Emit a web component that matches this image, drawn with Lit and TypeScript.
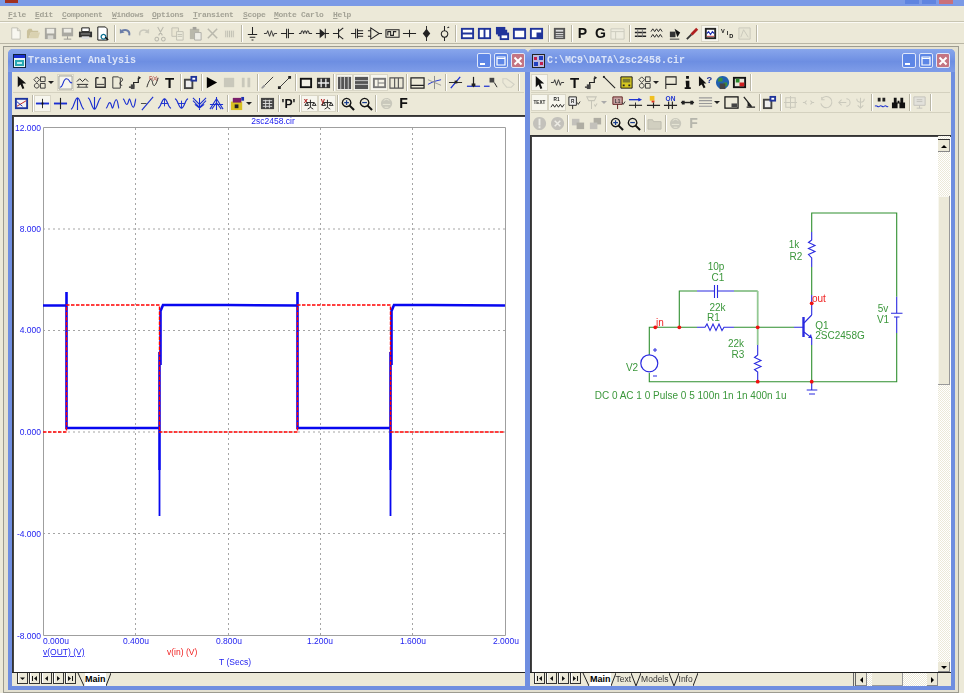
import { LitElement, html, css, svg } from "lit";
import { customElement } from "lit/decorators.js";

const L = (d: string, c = "#222", w = 1) => svg`<path d=${d} fill="none" stroke=${c} stroke-width=${w}/>`;
const F = (d: string, c = "#222") => svg`<path d=${d} fill=${c}/>`;
const X = (t: string, c = "#111", s = 14, fam = "Liberation Serif", w = "700", x = 8, y = 13) =>
  svg`<text x=${x} y=${y} fill=${c} font-size=${s} font-family=${fam} font-weight=${w} text-anchor="middle">${t}</text>`;
const B = "#1a2fd0";

const icons: Record<string, unknown[]> = {
  new: [F("M4 2h6l3 3v9H4z", "#fff"), L("M4 2h6l3 3v9H4zM10 2v3h3", "#a8a8a0")],
  open: [F("M1 13V5l2-2h3l1 2h6v2H5L3 13z", "#b5a878"), F("M3 13l2-6h10l-2 6z", "#cfc49a")],
  save: [F("M2 2h12v12H2z", "#7c7c7c"), F("M4 3h8v5H4z", "#eee"), F("M5 10h6v4H5z", "#ccc")],
  saveall: [F("M2 2h12v9H2z", "#808080"), F("M4 3h8v4H4z", "#eee"), L("M8 11v3M4 14h8", "#666")],
  print: [F("M4 2h8v4H4z", "#fff"), L("M4 2h8v4H4z", "#111"), F("M1 6h14v6H1z", "#333"), F("M3 8h10v1H3z", "#999"), F("M4 11h8v3H4z", "#ddd")],
  preview: [F("M3 1h8l2 2v12H3z", "#fff"), L("M3 1h8l2 2v12H3z", "#111"), L("M9 9a2.500 2.500 0 1 0 .1 0z", "#0a6f8f", 1.4), L("M11 12l3 3", "#111", 1.6)],
  undo: [L("M4 5c5-2 9 0 8 5", "#1b3a8a", 2), F("M2 3v5l5-1z", "#1b3a8a")],
  redo: [L("M12 5c-5-2-9 0-8 5", "#b5b5ac", 1.6), F("M14 3v5l-5-1z", "#b5b5ac")],
  cut: [L("M5 1l5 9M11 1L6 10M4 12a2 2 0 1 0 .1 0zM11 12a2 2 0 1 0 .1 0z", "#9c9c94", 1.1)],
  copy: [F("M2 2h7v9H2z", "#e8e4d0"), L("M2 2h7v9H2z", "#a5a59c"), F("M7 6h7v9H7z", "#f0eee0"), L("M7 6h7v9H7zM8 9h5M8 11h5", "#a5a59c")],
  paste: [F("M2 3h10v11H2z", "#9a9a90"), F("M5 1h4v3H5z", "#777"), F("M7 7h7v8H7z", "#eee"), L("M7 7h7v8H7z", "#888")],
  del: [L("M3 3l10 10M13 3L3 13", "#9c9c94", 1.6)],
  allb: [F("M2 4h12v9H2z", "#e8e5d6"), L("M4 5v7M6 5v7M8 5v7M10 5v7M12 5v7", "#a0a098", 1)],
  gnd: [L("M8 1v8M3 9h10M5 12h6M7 15h2", "#222", 1.1)],
  res: [L("M1 8h3l1-3 2 6 2-6 2 6 1-3h3", "#333")],
  cap: [L("M1 8h6M9 8h6M7 3v10M9 3v10", "#222", 1.1)],
  ind: [L("M1 8h2c1-4 2-4 3 0 1-4 2-4 3 0 1-4 2-4 3 0h3", "#333", 1.1)],
  diode: [F("M5 3v10l6-5z"), L("M1 8h14M11 3v10", "#222", 1.1)],
  bjt: [L("M1 8h6M7 3v10M7 6l5-4M7 10l5 4", "#222", 1.2)],
  mos: [L("M1 8h5M6 3v10M8 3v10M8 5h6M8 11h6M8 8h6", "#222", 1.1)],
  opamp: [L("M4 2v12l9-6zM1 5h3M1 11h3M13 8h3", "#222", 1.1)],
  xfmr: [L("M1 4h14v8H1zM3 10V6h3v4h3V6h3", "#222", 1.1)],
  wire: [L("M1 8h14M8 4v8", "#222", 1.1)],
  node: [F("M8 3l4 5-4 5-4-5z"), L("M8 0v16", "#222")],
  src: [L("M8 5a3.500 3.500 0 1 0 .1 0zM8 0v5M8 12v4M11 2l2-1", "#222", 1.1)],
  h2: [F("M1 2h14v12H1z", "#20349a"), F("M3 4h10v3H3zM3 9h10v3H3z", "#fff")],
  v2: [F("M1 2h14v12H1z", "#20349a"), F("M3 4h4v8H3zM9 4h4v8H9z", "#fff")],
  casc: [F("M1 1h10v8H1z", "#20349a"), F("M3 4h10v7H3z", "#20349a"), F("M5 7h10v8H5z", "#20349a"), F("M7 10h6v3H7z", "#fff")],
  win: [F("M1 2h14v12H1z", "#20349a"), F("M3 5h10v7H3z", "#fff")],
  tile: [F("M1 2h14v12H1z", "#20349a"), F("M3 4h5v8H3zM8 4h5v3H8z", "#fff")],
  calc: [F("M2 2h12v12H2z", "#555"), F("M4 4h8v2H4z", "#ddd"), L("M4 8h8M4 10h8M4 12h8", "#ddd")],
  P: [X("P", "#111", 15)],
  G: [X("G", "#111", 15)],
  grid0: [F("M1 3h14v11H1z", "#efeee4"), L("M1 3h14v11H1zM1 6h14M6 6v8", "#b8b8ae")],
  dots: [L("M2 3h12M2 7h12M2 11h12", "#222", 1.5), L("M5 3v9M10 3v9", "#777", 1)],
  waves: [L("M1 6l2-3 2 3 2-3 2 3 2-3 2 3M1 12l2-3 2 3 2-3 2 3 2-3 2 3", "#222")],
  probe: [F("M2 6h6v6H2z", "#333"), F("M7 3l6 4-3 5z", "#111"), L("M2 14h10", "#333")],
  screw: [L("M2 14l5-5", "#333", 2), L("M7 9l6-6", "#b02020", 3)],
  analyz: [F("M2 2h12v12H2z", "#222"), F("M4 4h8v8H4z", "#fff"), L("M4 8l2-2 2 3 2-3 2 2", "#2030b0", 1.2), L("M4 11h8", "#b03030")],
  vid: [X("V", "#111", 6, "Liberation Sans", "700", 3, 7), X("I", "#111", 6, "Liberation Sans", "700", 8, 10), X("D", "#111", 6, "Liberation Sans", "700", 12, 13)],
  dis: [F("M2 2h12v12H2z", "#e4e2d2"), L("M2 2h12v12H2zM4 12l3-8 5 8", "#b3b3aa")],
  arrow: [F("M4 1v12l3-3 2 5 2-1-2-5h4z", "#111")],
  comp: [L("M5 2l3 3-3 3-3-3zM9 2h5v5H9zM5 9a2.500 2.500 0 1 0 .1 0zM9 9h5v5H9z", "#333")],
  curve: [L("M1 1h14v14H1z", "#9a9a90"), L("M2 13c4 0 3-9 7-9s3 6 6 4", B, 1.1)],
  curves2: [L("M2 7l3-3 3 3 3-3 3 3M2 10h12", "#222"), L("M2 13h12M4 10v3M12 10v3", "#444")],
  bracket: [L("M3 3v10h10V3M3 3h3M10 3h3", "#333", 1.5), L("M4 10h8", "#333")],
  data: [L("M3 2h6l2 2v10H3z", "#333"), L("M11 3c3 0 3 3 1 4s-2 4 1 4", "#222")],
  step: [L("M1 13h5V8h5V3", "#222", 1.3), F("M11 1l3 2-3 2z", "#222"), F("M3 10h4v5H3z", "#444")],
  fxy: [L("M2 13C5 3 7 3 8 8s3 5 6-5", "#222"), X("F(x)", "#a02020", 5, "Liberation Sans", "400", 9, 5)],
  T: [X("T", "#111", 16, "Liberation Serif", "700", 8, 14)],
  props: [F("M1 4h10v11H1z", "#444"), F("M3 6h6v7H3z", "#eee"), F("M8 1h7v6H8z", "#20349a"), F("M10 3h3v2h-3z", "#fff")],
  play: [F("M3 2v12l11-6z", "#000")],
  stop: [F("M2 3h11v10H2z", "#b4b4aa")],
  pause: [F("M3 3h3v10H3zM9 3h3v10H9z", "#b4b4aa")],
  line: [L("M2 14L14 2", "#333"), L("M2 14l3-3", "#999", 2)],
  line2: [L("M2 14L14 2", "#333"), F("M1 12h3v3H1zM12 1h3v3h-3z", "#222")],
  frame: [F("M2 3h13v11H2z", "#111"), F("M4 5h9v7H4z", "#f3f1e6")],
  gridb: [F("M1 3h14v11H1z", "#333"), L("M5.500 4v9M10.500 4v9M2 8.500h12", "#eee", 1.4)],
  vlines: [F("M1 2h14v13H1z", "#555"), L("M4 2v13M8 2v13M12 2v13", "#ccc")],
  hlines: [F("M1 2h14v13H1z", "#555"), L("M1 6h14M1 10h14", "#ccc")],
  mix1: [F("M1 3h14v11H1z", "#777"), F("M3 5h3v7H3zM7 5h6v3H7zM7 9h6v3H7z", "#f6f4e9")],
  mix2: [L("M1 3h14v11H1zM6 3v11M10 3v11", "#555", 1.2)],
  panel: [L("M1 3h14v11H1zM1 11h14", "#222", 1.3)],
  lines: [L("M1 10l6-3 8-2", "#1a2fd0"), L("M1 5l14 6", "#999"), L("M8 1v14", "#888")],
  cross: [L("M3 14L13 2", B, 1.4), L("M1 8h14", "#222"), F("M7 6h3v3H7z", "#222")],
  cross2: [L("M1 12h14", B, 1.3), L("M8 2v11", "#222", 1.3), F("M6 9h4v3H6z", "#222")],
  jump: [L("M1 12h6", B, 1.3), F("M7 3h5v5H7z", "#444"), L("M12 8l3 5", "#222")],
  hand: [L("M2 4l4 0 8 6-3 3H6L2 8z", "#c2c2b8", 1.2)],
  scale: [F("M1 2h14v12H1z", "#1c34a0"), F("M3 4h10v8H3z", "#f2f2f2"), L("M3 11L13 5", "#c02020"), L("M3 6l6 5", "#2030b0")],
  crossh: [F("M1 7h14v2H1z", B), L("M8 3v10", "#222"), F("M7 7h2v2H7z", "#111")],
  crossh2: [F("M1 7h14v2H1z", B), L("M8 2v12", "#222", 1.2)],
  peak: [L("M1 14C4 14 5 2 8 2s4 12 7 12M8 2v13", B, 1.2)],
  val: [L("M1 2c3 0 4 12 7 12s4-12 7-12M8 1v13", B, 1.2)],
  pk2: [L("M1 13c2 0 2-6 4-6s2 6 3 6 2-9 4-9 2 9 3 9", B, 1.2)],
  val2: [L("M1 3c2 0 2 6 4 6s2-6 3-6 2 9 4 9 2-9 3-9", B, 1.2)],
  slope: [L("M2 15L14 1", B, 1.2), L("M1 8h6", "#444")],
  hi: [L("M1 13C4 13 5 3 8 3s4 10 7 10", B, 1.2), L("M4 8h8M8 3v8", B, 1)],
  lo: [L("M1 3c3 0 4 10 7 10s4-10 7-10", B, 1.2), L("M4 8h8M8 13V5", B, 1)],
  many: [L("M1 2l7 7 7-7M1 5l7 7 7-7M8 2v13M3 9l5 4 5-4", B, 1.1)],
  manyu: [L("M1 14L8 3l7 11M3 14l5-7 5 7M1 9h14M8 1v14", B, 1.1)],
  kit: [F("M1 6h12v9H1z", "#d8c020"), F("M3 2h9v5H3z", "#7a1f6a"), F("M5 9h4v4H5z", "#222"), F("M12 1h3v4h-3z", "#2030b0")],
  table: [F("M1 2h14v12H1z", "#444"), L("M3 5h10M3 8h10M3 11h10M6 4v9M10 4v9", "#ddd")],
  Pq: [X("'P'", "#111", 13, "Liberation Serif", "700", 8, 13)],
  xb: [X("x", "#b02020", 8, "Liberation Sans", "700", 4, 7), L("M9 4v8M5 7h8M6 14l3-2 3 2M5 7l-2 3h4zM13 7l-2 3h4z", "#222")],
  yb: [X("y", "#b02020", 8, "Liberation Sans", "700", 4, 7), L("M9 4v8M5 7h8M6 14l3-2 3 2M5 7l-2 3h4zM13 7l-2 3h4z", "#222")],
  zin: [L("M7 2.500a4.500 4.500 0 1 0 .1 0z", "#111", 1.4), L("M10 10l5 5", "#111", 2.2), L("M4.500 7h5M7 4.500v5", "#183c8e", 1.3)],
  zout: [L("M7 2.500a4.500 4.500 0 1 0 .1 0z", "#111", 1.4), L("M10 10l5 5", "#111", 2.2), L("M4.500 7h5", "#183c8e", 1.3)],
  palette: [F("M8 2a6 6 0 1 0 .1 0z", "#b5b5ab"), L("M5 5a4 4 0 0 1 6 0M4 9h8M6 12h4", "#e8e6d8")],
  F: [X("F", "#111", 15)],
  Fd: [X("F", "#b6b6ac", 15)],
  trace: [L("M1 2h5v6h5v5h4", "#222", 1.3), L("M12 13l2 2", "#222")],
  diag: [L("M2 2l12 12", "#222", 1.2), F("M1 1h2v2H1z", "#222")],
  chip: [F("M2 2h12v12H2z", "#d6c820"), L("M2 2h12v12H2z", "#111"), F("M4 4h8v4H4z", "#7a7a30"), F("M4 10h2v2H4zM10 10h2v2h-2z", "#222")],
  flag: [L("M3 15V2h11v8H3", "#222", 1.1)],
  info: [F("M6.500 1h3v3h-3zM6 6h4v7h1.500v2h-6.500v-2h1.500z", "#111")],
  help: [F("M1 1v11l3-2 2 4 2-1-2-4h3z", "#111"), X("?", "#20349a", 10, "Liberation Sans", "700", 12, 9)],
  globe: [F("M8 1a7 7 0 1 0 .1 0z", "#2060b0"), F("M4 3h4v4H3zM9 8h4v4H9z", "#3a8f3a"), F("M5 9h6v6H5z", "#444")],
  run: [F("M1 2h14v12H1z", "#111"), F("M3 4h10v8H3z", "#e8e6da"), F("M4 4h4v4H4z", "#2a8a2a"), F("M8 8h5v4H8z", "#d02020")],
  txt: [X("TEXT", "#222", 5, "Liberation Sans", "700", 8, 10)],
  rnum: [X("R1", "#222", 5, "Liberation Sans", "700", 7, 6), L("M1 13l2-3 2 3 2-3 2 3 2-3 2 3 2-3", "#222")],
  pin: [F("M2 2h8v9H2z", "#eee"), L("M2 2h8v9H2zM6 11v4", "#222"), X("R", "#222", 5, "Liberation Sans", "700", 6, 8), L("M11 8l1 2 2-3", "#333")],
  sw: [L("M3 2h10l-2 4H5zM8 6v9M11 10l1 2 2-3", "#b0b0a6", 1.1)],
  pinr: [F("M2 2h10v8H2z", "#c6a0a0"), L("M2 2h10v8H2zM7 10v5", "#612020"), X("L1", "#333", 5, "Liberation Sans", "700", 7, 8), L("M12 8l1 2 2-3", "#333")],
  arrw: [L("M1 5h11", B, 1.4), F("M11 3l4 2-4 2z", B), L("M1 11h14", "#222", 1.2), L("M8 8v6", "#222")],
  fault: [F("M4 1h5v5H4z", "#f0c020"), F("M6 6h3v2H6z", "#e03020"), L("M1 11h14M8 8v6", "#222", 1.2)],
  on: [X("ON", "#1a2fd0", 7, "Liberation Sans", "700", 8, 6), L("M1 11h14M6 7v8M10 7v8", "#222", 1.2)],
  dash: [L("M1 8h14", "#222", 1.5), F("M2 6h3v4H2zM11 6h3v4h-3z", "#222")],
  dotgrid: [L("M1 3h14M1 6h14M1 9h14M1 12h14", "#999", 1.2)],
  page: [L("M1 2h14v12H1z", "#111", 1.3), F("M8 9h6v4H8z", "#444")],
  cursor: [L("M3 2l8 10M6 13h9", "#222", 1.3), F("M7 7l5 6-5-1z", "#222")],
  grp: [L("M3 3h10v10H3zM1 8h14M8 1v14", "#b6b6ac", 1.1)],
  mirror: [L("M2 8h3M11 8h3M6 6l-2 2 2 2M10 6l2 2-2 2", "#b6b6ac", 1.1)],
  rot: [L("M4 4a6 6 0 1 1-1 5M4 2v3h3", "#b6b6ac", 1.1)],
  flip: [L("M3 8h8M11 4a4 4 0 0 1 0 8M6 5l-3 3 3 3", "#b6b6ac", 1.1)],
  flipv: [L("M8 3v10M4 4c0 5 8 5 8 0M5 11l3 3 3-3", "#b6b6ac", 1.1)],
  wfind: [F("M4 3h3v4H4zM9 3h3v4H9z", "#222"), L("M1 12c2-2 3 2 5 0s3 2 5 0 3 2 4 0", B, 1.1)],
  bino: [F("M1 8h6v6H1zM9 8h6v6H9zM3 3h3v6H3zM10 3h3v6h-3zM7 6h2v3H7z", "#111")],
  screen: [F("M2 2h12v9H2z", "#ddd"), L("M2 2h12v9H2zM5 5h6M5 7h6M8 11v3M5 14h6", "#aaa")],
  warn: [F("M8 1a7 7 0 1 0 .1 0z", "#aaa"), F("M7 3h2v7H7zM7 11h2v2H7z", "#eee")],
  xc: [F("M8 1a7 7 0 1 0 .1 0z", "#aaa"), L("M5 5l6 6M11 5l-6 6", "#eee", 1.6)],
  mv1: [F("M1 3h8v7H1z", "#aaa"), F("M6 7h8v7H6z", "#8a8a84")],
  mv2: [F("M6 2h8v7H6z", "#8a8a84"), F("M2 7h8v7H2z", "#aaa")],
  folder: [F("M1 4h5l1 2h8v8H1z", "#c2c0b2"), L("M1 4h5l1 2h8v8H1z", "#a0a096")],
};

const topRow = "new open save saveall print preview | undo redo cut copy paste del allb | gnd res cap ind diode bjt mos opamp xfmr wire node src | h2 v2 casc win tile | calc | P G grid0 | dots waves probe screw *analyz vid ~dis |";
const lr1 = "arrow comp v *curve curves2 bracket data step fxy T | props | play stop pause | line line2 | frame gridb | *vlines *hlines *mix1 mix2 | panel lines | cross cross2 jump ~hand |";
const lr2 = "scale | *crossh crossh2 peak val pk2 val2 slope hi lo many manyu | kit v | table | Pq | *xb *yb | zin zout | palette F";
const rr1 = "*arrow res T step diag chip comp v flag info help globe run |";
const rr2 = "*txt *rnum pin sw ~v pinr arrw fault on dash dotgrid v page cursor | props | grp mirror rot flip flipv | wfind bino | screen |";
const rr3 = "warn xc | mv1 mv2 | zin zout | folder | palette Fd";
const faded = new Set(["new","open","save","saveall","undo","redo","cut","copy","paste","del","allb","grp","mirror","rot","flip","flipv","screen","warn","xc","mv1","mv2","folder","palette","stop","pause","grid0","sw","hand","dis"]);

@customElement("app-root")
export class AppRoot extends LitElement {
  static styles = css`
    :host { display: block; width: 964px; height: 693px; overflow: hidden; background: #ece9d8; font-family: "Liberation Sans", sans-serif; }
    .app { display: flex; flex-direction: column; height: 693px; filter: blur(0.35px); }
    .top { height: 6px; flex: none; background: #7b9ae6; display: flex; justify-content: flex-end; padding-right: 11px; gap: 3px; }
    .top i { width: 14px; height: 4px; background: #5f84e0; display: block; }
    .top i.x { background: #c9707a; }
    .top b { width: 13px; height: 3px; background: #a03020; margin: 0 auto 0 5px; display: block; }
    .menu { height: 16px; flex: none; border-bottom: 1px solid #c8c5b2; box-sizing: border-box; padding: 1px 0 0 8px; display: flex; font: 700 8px/15px "Liberation Mono", monospace; letter-spacing: -0.3px; color: #a3a295; }
    .menu span { white-space: pre; }
    .m0 { width: 27px; } .m1 { width: 50px; } .m2 { width: 40px; } .m3 { width: 41px; } .m4 { width: 31px; } .m5 { width: 59px; } .m6 { width: 20px; }
    .main { height: 22px; flex: none; border-top: 1px solid #fbfaf4; border-bottom: 1px solid #b9b6a6; box-sizing: border-box; }
    .mdi { height: 643px; flex: none; margin: 2px 5px 1px 3px; border: 1px solid #9c9b90; box-sizing: content-box; display: flex; padding: 2px 2px 0 4px; align-items: flex-start; background: #e4e1d1; }
    .win { box-sizing: border-box; height: 641px; flex: none; background: #ece9d8; display: flex; flex-direction: column; border-bottom: 4px solid #6f8ee0; border-radius: 5px 5px 0 0; border-style: solid; border-color: #6f8ee0; border-width: 0 3px 4px 4px; }
    .left { width: 520px; }
    .right { width: 427px; border-width: 0 4px 4px 2px; }
    .tb { height: 23px; flex: none; background: linear-gradient(#88a6ec, #6d8ee2 55%, #7f9de8); border-radius: 5px 5px 0 0; display: flex; align-items: center; gap: 3px; }
    .left .tb { margin: 0 -3px 0 -4px; padding: 0 3px 0 5px; }
    .right .tb { margin: 0 -4px 0 -2px; padding: 0 5px 0 4px; }
    .tb .ti { flex: 1; font: 700 10px "Liberation Mono", monospace; color: #dbe4f8; white-space: pre; overflow: hidden; margin-left: -1px; }
    .wb { width: 14px; height: 15px; box-sizing: border-box; border: 1px solid #dfe7fa; border-radius: 2px; background: #5d86e6; display: flex; align-items: center; justify-content: center; }
    .wb.close { background: #c47482; }
    .wb svg { width: 12px; height: 12px; }
    .ticon { width: 13px; height: 14px; flex: none; }
    .rows { flex: none; padding: 1px 0 2px; }
    .row { display: flex; align-items: center; height: 20px; box-sizing: border-box; border-bottom: 1px solid #d4d1bf; margin: 0 1px; }
    .row.last { border-bottom: 0; }
    .row.main-row { height: 21px; border: 0; margin: 0; padding-left: 7px; }
    .ib { width: 17.4px; height: 17px; flex: none; display: flex; align-items: center; justify-content: center; box-sizing: border-box; }
    .ib svg { width: 15px; height: 15px; display: block; overflow: visible; }
    .ib.on { background: #f7f6ee; outline: 1px solid #d9d6c6; outline-offset: -1px; }
    .ib.fade svg { opacity: 0.62; }
    .sep { width: 1px; height: 17px; margin: 0 1.3px; flex: none; background: #b9b6a5; box-shadow: 1px 0 #fff; }
    .main-row .sep { margin: 0 2.3px; }
    .drop { width: 0; height: 0; flex: none; margin: 0 3px 0 0; border: 3px solid transparent; border-top: 3px solid #222; border-bottom: 0; }
    .drop.off { border-top-color: #aaa; }
    .body { flex: 1; min-height: 0; background: #fff; border: 1px solid #333; border-width: 1px 0 0 1px; display: flex; box-shadow: inset 1px 1px #444; }
    .body svg { display: block; }
    .chart { width: 512px; height: 556px; }
    .canvas { width: 407px; height: 536px; flex: none; }
    .vs { width: 12px; flex: none; display: flex; flex-direction: column; padding-top: 3px; background: repeating-conic-gradient(#fff 0 25%, #ece9d8 0 50%) 0 0 / 2px 2px; }
    .vs .sb { height: 13px; flex: none; background: #ece9d8; display: flex; align-items: center; justify-content: center; border-top: 1px solid #333; box-sizing: border-box; box-shadow: inset -1px -1px #888; }
    .vs .sb.dn { height: 10px; border-top: 0; }
    .vs .thumb { height: 189px; flex: none; margin-top: 44px; background: #ece9d8; box-shadow: inset -1px -1px #999, inset 1px 1px #f8f7ef; }
    .vs .grow { flex: 1; }
    .arr { width: 0; height: 0; border: 3px solid transparent; }
    .arr.u { border-bottom: 3px solid #000; border-top: 0; }
    .arr.d { border-top: 3px solid #000; border-bottom: 0; }
    .arr.l { border-right: 3px solid #000; border-left: 0; }
    .arr.r { border-left: 3px solid #000; border-right: 0; }
    .tabs { height: 13px; flex: none; border-top: 1px solid #222; background: #ece9d8; display: flex; align-items: center; font-size: 8.5px; color: #333; }
    .nav { width: 11px; height: 11px; flex: none; margin-right: 1px; border: 1px solid #333; border-top: 0; box-sizing: border-box; background: #ece9d8; display: flex; align-items: center; justify-content: center; box-shadow: inset 1px 0 #fff; align-self: flex-start; }
    .nav svg { width: 7px; height: 7px; }
    .lpad { width: 5px; flex: none; }
    .right .lpad { width: 4px; }
    .tab { height: 13px; line-height: 12px; white-space: nowrap; }
    .tab.act { background: #fff; font-weight: 700; font-size: 9px; color: #000; }
    .sl { width: 5px; height: 13px; flex: none; }
    .sl.fst { width: 7px; padding-right: 1px; box-sizing: content-box; }
    .hsp { flex: 1; }
    .divd { width: 3px; height: 13px; border: 1px solid #666; border-width: 0 1px; box-sizing: border-box; flex: none; }
    .hbar { width: 82px; height: 13px; flex: none; display: flex; align-items: center; background: repeating-conic-gradient(#fff 0 25%, #ece9d8 0 50%) 0 0 / 2px 2px; }
    .hbtn { width: 11px; height: 13px; background: #ece9d8; flex: none; display: flex; align-items: center; justify-content: center; box-shadow: inset -1px -1px #888; }
    .hth { width: 31px; height: 13px; margin-left: 5px; background: #ece9d8; box-shadow: inset -1px -1px #999; flex: none; }
    .hg { flex: 1; }
    .corner { width: 13px; flex: none; }
    text { font-family: "Liberation Sans", sans-serif; }
  `;

  private bar(spec: string, cls = "") {
    return html`<div class="row ${cls}">
      ${spec.split(" ").map((t) => {
        if (t === "|") return html`<span class="sep"></span>`;
        if (t === "v") return html`<span class="drop"></span>`;
        if (t === "~v") return html`<span class="drop off"></span>`;
        const on = t.startsWith("*");
        const dis = t.startsWith("~");
        const n = on || dis ? t.slice(1) : t;
        return html`<span class="ib ${on ? "on" : ""} ${faded.has(n) || dis ? "fade" : ""}"><svg viewBox="0 0 16 16">${icons[n]}</svg></span>`;
      })}
    </div>`;
  }

  private winBtns() {
    return html`
      <span class="wb"><svg viewBox="0 0 12 12"><path d="M2 8h5v2H2z" fill="#fff"/></svg></span>
      <span class="wb"><svg viewBox="0 0 12 12"><path d="M2 2h8v8H2zM2 3.500h8" fill="none" stroke="#fff" stroke-width="1.200"/></svg></span>
      <span class="wb close"><svg viewBox="0 0 12 12"><path d="M2.500 2.500l7 7M9.500 2.500l-7 7" stroke="#fff" stroke-width="2"/></svg></span>`;
  }

  private nav(d: string) {
    return html`<span class="nav"><svg viewBox="0 0 7 7"><path d=${d} fill="#111"/></svg></span>`;
  }

  private chart() {
    const xs = [135.5, 228.5, 320.5, 412.5];
    const ys = [229, 330.5, 432, 533.5];
    const yl: [string, number][] = [["12.000", 128], ["8.000", 229], ["4.000", 330], ["0.000", 432], ["-4.000", 534], ["-8.000", 636]];
    const xl: [string, number][] = [["0.000u", 43], ["0.400u", 123], ["0.800u", 216], ["1.200u", 307], ["1.600u", 400], ["2.000u", 493]];
    return svg`<svg class="chart" viewBox="13 116 512 556">
      <g stroke="#a5a5a5" stroke-dasharray="2 3" fill="none">
        ${xs.map((x) => svg`<path d="M${x} 128V635"/>`)}
        ${ys.map((y) => svg`<path d="M43 ${y}H505"/>`)}
      </g>
      <path d="M43.500 127.500H505.500V635.500H43.500Z" fill="none" stroke="#9f9f9f"/>
      <g font-size="8.500" fill="#2323f0">
        <text x="273" y="124" text-anchor="middle">2sc2458.cir</text>
        ${yl.map(([t, y]) => svg`<text x="41" y=${y + 3} text-anchor="end">${t}</text>`)}
        ${xl.map(([t, x]) => svg`<text x=${x} y="644">${t}</text>`)}
        <text x="43" y="655" text-decoration="underline">v(OUT) (V)</text>
        <text x="219" y="665">T (Secs)</text>
      </g>
      <text x="167" y="655" font-size="8.500" fill="#f02020">v(in) (V)</text>
      <path d="M43 305.500H66.500M66.500 292V428H159.500M159.500 470V352M160.500 365V311L163 305H228L297.500 305.500M297.500 292V428H390.500M390.500 470V352M391.500 365V311L394 305H430L505 305.500" fill="none" stroke="#0808f0" stroke-width="2.600"/>
      <path d="M159.500 470V516M390.500 470V516" fill="none" stroke="#0808f0" stroke-width="1.800"/>
      <path d="M43 432H66.500V305H159.500V432H297.500V305H390.500V432H505" fill="none" stroke="#f00" stroke-width="1.400" stroke-dasharray="3.500 1.500"/>
    </svg>`;
  }

  private schematic() {
    const g = "#2f8f2f";
    const bl = "#2a2ae0";
    const dots: [number, number][] = [[655.3, 327.3], [679.3, 327.3], [757.7, 327.3], [811.7, 303.3], [757.7, 381.7], [811.7, 381.7]];
    const tx: [string, number, number][] = [
      ["10p", 716, 270], ["C1", 718, 280.5], ["22k", 717.5, 310.5], ["R1", 713.5, 321], ["22k", 736, 346.5],
      ["R3", 738, 358], ["1k", 794, 248], ["R2", 796, 259.5], ["5v", 883, 311.5], ["V1", 883, 322.5], ["V2", 632, 370.5], ["Q1", 822, 328.5], ["2SC2458G", 840, 339],
    ];
    return svg`<svg class="canvas" viewBox="531 136 407 536">
      <path d="M811.700 232V213H896.700V296.700M896.700 333V381.700H649.300V373M649.300 355V327.300H697M734 327.300H794M679.300 327.300V291H697M734 291H757.700M811.700 267V295M811.700 345V381.700" fill="none" stroke=${g} stroke-width="1.100"/>
      <path d="M757.700 291V345" stroke="#93c993" stroke-width="1.800"/>
      <path d="M697 291H714M718 291H734M714.500 285V298M717.500 285V298M697 327.300H705L707 324 710 330.500 713 324 716 330.500 719 324 722 330.500 724 327.300H734M757.700 345V355L754.500 357.500 761 360.500 754.500 363.500 761 366.500 754.500 369.500 757.700 372V381.700M811.700 232V240L808.500 242.500 815 245.500 808.500 248.500 815 251.500 808.500 254.500 811.700 258V267M811.700 295V315M794 327.300H803M804 323L811.700 315M804 332L811.700 338V345M811.700 381.700V390M806.700 390H817.300M809 394H815M896.700 296.700V313M896.700 317V333M891 313.300H902.500M894 317H899.500" fill="none" stroke=${bl} stroke-width="1.100"/>
      <path d="M803.500 317V337" stroke=${bl} stroke-width="2.400"/>
      <path d="M808 338l4 0 -1-4z" fill=${bl}/>
      <circle cx="649.300" cy="363.300" r="8.500" fill="#fff" stroke=${bl} stroke-width="1.200"/>
      <path d="M655 348v4M653 350h4M653 376h4" stroke=${bl}/>
      ${dots.map(([x, y]) => svg`<circle cx=${x} cy=${y} r="1.900" fill="#f01010"/>`)}
      <g font-size="10" fill="#3b973b">
        ${tx.map(([t, x, y]) => svg`<text x=${x} y=${y} text-anchor="middle">${t}</text>`)}
        <text x="594.700" y="398.500">DC 0 AC 1 0 Pulse 0 5 100n 1n 1n 400n 1u</text>
      </g>
      <g font-size="10" fill="#f02020">
        <text x="656" y="326">jn</text>
        <text x="812" y="302">out</text>
      </g>
    </svg>`;
  }

  render() {
    const menus: [string, string, string][] = [["F", "ile", "m0"], ["E", "dit", "m0"], ["C", "omponent", "m1"], ["W", "indows", "m2"], ["O", "ptions", "m3"], ["T", "ransient", "m1"], ["S", "cope", "m4"], ["M", "onte Carlo", "m5"], ["H", "elp", "m6"]];
    const slant = svg`<svg class="sl" viewBox="0 0 5 13" preserveAspectRatio="none"><path d="M0 0L5 13" stroke="#222" fill="none"/></svg>`;
    const slantF = svg`<svg class="sl fst" viewBox="0 0 7 13"><path d="M1 0L7 13" stroke="#222" fill="none"/></svg>`;
    const slant2 = svg`<svg class="sl" viewBox="0 0 5 13" preserveAspectRatio="none"><path d="M5 0L0 13" stroke="#222" fill="none"/></svg>`;
    const first = "M1 1h1v5H1zM6 1v5L3 3.500z";
    const prev = "M5 1v5L2 3.500z";
    const next = "M2 1v5L5 3.500z";
    const last = "M1 1v5l3-2.500zM5 1h1v5H5z";
    return html`<div class="app">
      <div class="top"><b></b><i></i><i></i><i class="x"></i></div>
      <div class="menu">${menus.map(([a, b, w]) => html`<span class=${w}><u>${a}</u>${b}</span>`)}</div>
      <div class="main">${this.bar(topRow, "main-row")}</div>
      <div class="mdi">
        <section class="win left">
          <div class="tb">
            <svg class="ticon" viewBox="0 0 13 14"><path d="M0 0h13v14H0z" fill="#10243f"/><path d="M1 1h11v3H1z" fill="#1a30d0"/><path d="M1 4h11v9H1z" fill="#e8f4f4"/><path d="M2 6h9v6H2z" fill="#2aa8b4"/><path d="M4 8h5v2H4z" fill="#bfecec"/></svg>
            <span class="ti">Transient Analysis</span>${this.winBtns()}
          </div>
          <div class="rows">${this.bar(lr1)}${this.bar(lr2, "last")}</div>
          <div class="body">${this.chart()}</div>
          <div class="tabs">
            <span class="lpad"></span>
            ${this.nav("M1 2.500h5L3.500 5z")}${this.nav(first)}${this.nav(prev)}${this.nav(next)}${this.nav(last)}
            ${slantF}<span class="tab act">Main</span>${slant2}
          </div>
        </section>
        <section class="win right">
          <div class="tb">
            <svg class="ticon" viewBox="0 0 13 14"><path d="M0 0h13v14H0z" fill="#222"/><path d="M1 1h11v12H1z" fill="#b8b8e0"/><path d="M2 3h3v3H2zM8 8h3v3H8z" fill="#c02050"/><path d="M7 2h4v4H7zM2 8h4v4H2z" fill="#2040c0"/></svg>
            <span class="ti">C:\\MC9\\DATA\\2sc2458.cir</span>${this.winBtns()}
          </div>
          <div class="rows">${this.bar(rr1)}${this.bar(rr2)}${this.bar(rr3, "last")}</div>
          <div class="body">
            ${this.schematic()}
            <div class="vs">
              <div class="sb"><span class="arr u"></span></div>
              <div class="thumb"></div>
              <div class="grow"></div>
              <div class="sb dn"><span class="arr d"></span></div>
            </div>
          </div>
          <div class="tabs">
            <span class="lpad"></span>
            ${this.nav(first)}${this.nav(prev)}${this.nav(next)}${this.nav(last)}
            ${slantF}<span class="tab act">Main</span>${slant2}<span class="tab">Text</span>${slant}${slant2}<span class="tab">Models</span>${slant}${slant2}<span class="tab">Info</span>${slant2}
            <span class="hsp"></span>
            <span class="divd"></span>
            <span class="hbar">
              <span class="hbtn"><span class="arr l"></span></span><span class="hth"></span><span class="hg"></span><span class="hbtn"><span class="arr r"></span></span>
            </span>
            <span class="corner"></span>
          </div>
        </section>
      </div>
    </div>`;
  }
}
